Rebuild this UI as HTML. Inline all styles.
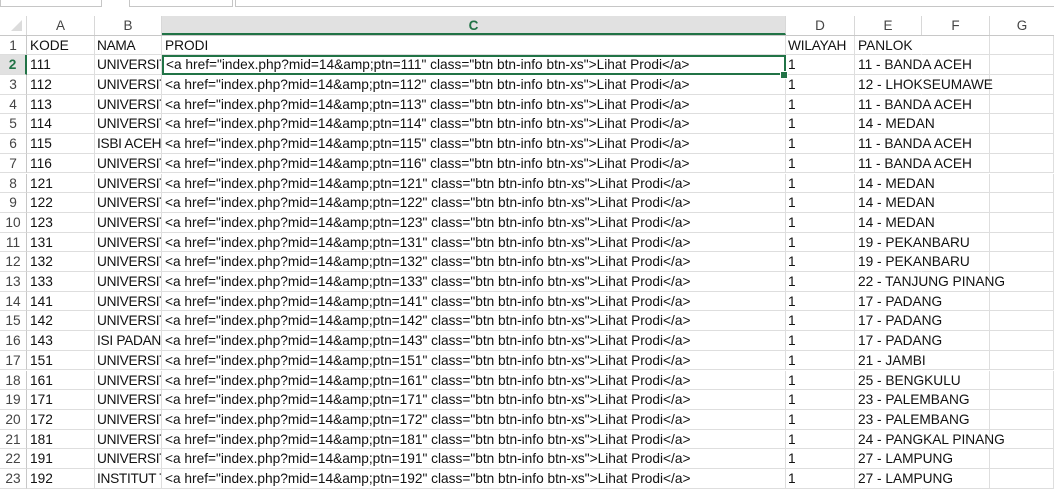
<!DOCTYPE html>
<html><head><style>
body{margin:0;width:1054px;height:486px;overflow:hidden;background:#fff;font-family:"Liberation Sans",Calibri,sans-serif;position:relative}
.tb{position:absolute;top:-2px;height:7px;border:1px solid #c6c6c6;background:#fff}
.hdr{position:absolute;top:16px;height:19px;background:#fff;border-bottom:1px solid #c8c8c8}
.hc{position:absolute;top:0;height:19px;border-right:1px solid #d8d8d8;text-align:center;font-size:13.5px;line-height:19px;color:#444}
.r{position:absolute;left:0;width:1054px;height:19.7px}
.c{position:absolute;top:0;height:100%;box-sizing:border-box;border-right:1px solid #dedede;border-bottom:1px solid #dedede;font-size:13.7px;line-height:19.7px;padding-left:3px;white-space:nowrap;overflow:hidden;color:#111}
.n{left:0;width:27px;text-align:center;padding:0;color:#444;border-right:1px solid #c8c8c8;background:#fff}
.a{left:27px;width:68px}.b{left:95px;width:67px;padding-left:2px;letter-spacing:-0.3px}.cc{left:162px;width:624px}.d{left:786px;width:69px;padding-left:2px;letter-spacing:-0.2px}.e{left:855px;width:67px;overflow:visible;z-index:2;border-right-color:transparent}.f{left:922px;width:68px}.g{left:990px;width:64px}
</style></head><body>
<div class="tb" style="left:0;width:100px"></div>
<div class="tb" style="left:129px;width:102px"></div>
<div class="tb" style="left:235px;width:830px"></div>
<div class="hdr" style="left:0;width:1054px">
<div class="hc" style="left:0;width:26px"><svg width="26" height="19"><polygon points="22,4 22,15 11,15" fill="#dcdcdc"/></svg></div>
<div class="hc" style="left:27px;width:67px">A</div>
<div class="hc" style="left:95px;width:66px">B</div>
<div class="hc" style="left:162px;width:623px;background:#e1e1e1;border-bottom:2px solid #217346;height:17px;line-height:19px;font-weight:bold;color:#217346">C</div>
<div class="hc" style="left:786px;width:68px">D</div>
<div class="hc" style="left:855px;width:66px">E</div>
<div class="hc" style="left:922px;width:67px">F</div>
<div class="hc" style="left:990px;width:64px;border-right:none">G</div>
</div>

<div class="r" style="top:35.6px"><div class="c n">1</div><div class="c a">KODE</div><div class="c b">NAMA</div><div class="c cc">PRODI</div><div class="c d">WILAYAH</div><div class="c e">PANLOK</div><div class="c f"></div><div class="c g"></div></div>
<div class="r" style="top:55.3px"><div class="c n" style="background:#e1e1e1;color:#217346;font-weight:bold;border-right:2px solid #217346">2</div><div class="c a">111</div><div class="c b">UNIVERSIT</div><div class="c cc" style="border:2px solid #217346;line-height:16px;padding-left:2px">&lt;a href="index.php?mid=14&amp;amp;ptn=111" class="btn btn-info btn-xs"&gt;Lihat Prodi&lt;/a&gt;</div><div class="c d">1</div><div class="c e">11 - BANDA ACEH</div><div class="c f"></div><div class="c g"></div></div>
<div class="r" style="top:75.0px"><div class="c n">3</div><div class="c a">112</div><div class="c b">UNIVERSIT</div><div class="c cc">&lt;a href="index.php?mid=14&amp;amp;ptn=112" class="btn btn-info btn-xs"&gt;Lihat Prodi&lt;/a&gt;</div><div class="c d">1</div><div class="c e">12 - LHOKSEUMAWE</div><div class="c f"></div><div class="c g"></div></div>
<div class="r" style="top:94.7px"><div class="c n">4</div><div class="c a">113</div><div class="c b">UNIVERSIT</div><div class="c cc">&lt;a href="index.php?mid=14&amp;amp;ptn=113" class="btn btn-info btn-xs"&gt;Lihat Prodi&lt;/a&gt;</div><div class="c d">1</div><div class="c e">11 - BANDA ACEH</div><div class="c f"></div><div class="c g"></div></div>
<div class="r" style="top:114.4px"><div class="c n">5</div><div class="c a">114</div><div class="c b">UNIVERSIT</div><div class="c cc">&lt;a href="index.php?mid=14&amp;amp;ptn=114" class="btn btn-info btn-xs"&gt;Lihat Prodi&lt;/a&gt;</div><div class="c d">1</div><div class="c e">14 - MEDAN</div><div class="c f"></div><div class="c g"></div></div>
<div class="r" style="top:134.1px"><div class="c n">6</div><div class="c a">115</div><div class="c b">ISBI ACEH(</div><div class="c cc">&lt;a href="index.php?mid=14&amp;amp;ptn=115" class="btn btn-info btn-xs"&gt;Lihat Prodi&lt;/a&gt;</div><div class="c d">1</div><div class="c e">11 - BANDA ACEH</div><div class="c f"></div><div class="c g"></div></div>
<div class="r" style="top:153.8px"><div class="c n">7</div><div class="c a">116</div><div class="c b">UNIVERSIT</div><div class="c cc">&lt;a href="index.php?mid=14&amp;amp;ptn=116" class="btn btn-info btn-xs"&gt;Lihat Prodi&lt;/a&gt;</div><div class="c d">1</div><div class="c e">11 - BANDA ACEH</div><div class="c f"></div><div class="c g"></div></div>
<div class="r" style="top:173.5px"><div class="c n">8</div><div class="c a">121</div><div class="c b">UNIVERSIT</div><div class="c cc">&lt;a href="index.php?mid=14&amp;amp;ptn=121" class="btn btn-info btn-xs"&gt;Lihat Prodi&lt;/a&gt;</div><div class="c d">1</div><div class="c e">14 - MEDAN</div><div class="c f"></div><div class="c g"></div></div>
<div class="r" style="top:193.2px"><div class="c n">9</div><div class="c a">122</div><div class="c b">UNIVERSIT</div><div class="c cc">&lt;a href="index.php?mid=14&amp;amp;ptn=122" class="btn btn-info btn-xs"&gt;Lihat Prodi&lt;/a&gt;</div><div class="c d">1</div><div class="c e">14 - MEDAN</div><div class="c f"></div><div class="c g"></div></div>
<div class="r" style="top:212.9px"><div class="c n">10</div><div class="c a">123</div><div class="c b">UNIVERSIT</div><div class="c cc">&lt;a href="index.php?mid=14&amp;amp;ptn=123" class="btn btn-info btn-xs"&gt;Lihat Prodi&lt;/a&gt;</div><div class="c d">1</div><div class="c e">14 - MEDAN</div><div class="c f"></div><div class="c g"></div></div>
<div class="r" style="top:232.6px"><div class="c n">11</div><div class="c a">131</div><div class="c b">UNIVERSIT</div><div class="c cc">&lt;a href="index.php?mid=14&amp;amp;ptn=131" class="btn btn-info btn-xs"&gt;Lihat Prodi&lt;/a&gt;</div><div class="c d">1</div><div class="c e">19 - PEKANBARU</div><div class="c f"></div><div class="c g"></div></div>
<div class="r" style="top:252.3px"><div class="c n">12</div><div class="c a">132</div><div class="c b">UNIVERSIT</div><div class="c cc">&lt;a href="index.php?mid=14&amp;amp;ptn=132" class="btn btn-info btn-xs"&gt;Lihat Prodi&lt;/a&gt;</div><div class="c d">1</div><div class="c e">19 - PEKANBARU</div><div class="c f"></div><div class="c g"></div></div>
<div class="r" style="top:272.0px"><div class="c n">13</div><div class="c a">133</div><div class="c b">UNIVERSIT</div><div class="c cc">&lt;a href="index.php?mid=14&amp;amp;ptn=133" class="btn btn-info btn-xs"&gt;Lihat Prodi&lt;/a&gt;</div><div class="c d">1</div><div class="c e">22 - TANJUNG PINANG</div><div class="c f"></div><div class="c g"></div></div>
<div class="r" style="top:291.7px"><div class="c n">14</div><div class="c a">141</div><div class="c b">UNIVERSIT</div><div class="c cc">&lt;a href="index.php?mid=14&amp;amp;ptn=141" class="btn btn-info btn-xs"&gt;Lihat Prodi&lt;/a&gt;</div><div class="c d">1</div><div class="c e">17 - PADANG</div><div class="c f"></div><div class="c g"></div></div>
<div class="r" style="top:311.4px"><div class="c n">15</div><div class="c a">142</div><div class="c b">UNIVERSIT</div><div class="c cc">&lt;a href="index.php?mid=14&amp;amp;ptn=142" class="btn btn-info btn-xs"&gt;Lihat Prodi&lt;/a&gt;</div><div class="c d">1</div><div class="c e">17 - PADANG</div><div class="c f"></div><div class="c g"></div></div>
<div class="r" style="top:331.1px"><div class="c n">16</div><div class="c a">143</div><div class="c b">ISI PADANG</div><div class="c cc">&lt;a href="index.php?mid=14&amp;amp;ptn=143" class="btn btn-info btn-xs"&gt;Lihat Prodi&lt;/a&gt;</div><div class="c d">1</div><div class="c e">17 - PADANG</div><div class="c f"></div><div class="c g"></div></div>
<div class="r" style="top:350.8px"><div class="c n">17</div><div class="c a">151</div><div class="c b">UNIVERSIT</div><div class="c cc">&lt;a href="index.php?mid=14&amp;amp;ptn=151" class="btn btn-info btn-xs"&gt;Lihat Prodi&lt;/a&gt;</div><div class="c d">1</div><div class="c e">21 - JAMBI</div><div class="c f"></div><div class="c g"></div></div>
<div class="r" style="top:370.5px"><div class="c n">18</div><div class="c a">161</div><div class="c b">UNIVERSIT</div><div class="c cc">&lt;a href="index.php?mid=14&amp;amp;ptn=161" class="btn btn-info btn-xs"&gt;Lihat Prodi&lt;/a&gt;</div><div class="c d">1</div><div class="c e">25 - BENGKULU</div><div class="c f"></div><div class="c g"></div></div>
<div class="r" style="top:390.2px"><div class="c n">19</div><div class="c a">171</div><div class="c b">UNIVERSIT</div><div class="c cc">&lt;a href="index.php?mid=14&amp;amp;ptn=171" class="btn btn-info btn-xs"&gt;Lihat Prodi&lt;/a&gt;</div><div class="c d">1</div><div class="c e">23 - PALEMBANG</div><div class="c f"></div><div class="c g"></div></div>
<div class="r" style="top:409.9px"><div class="c n">20</div><div class="c a">172</div><div class="c b">UNIVERSIT</div><div class="c cc">&lt;a href="index.php?mid=14&amp;amp;ptn=172" class="btn btn-info btn-xs"&gt;Lihat Prodi&lt;/a&gt;</div><div class="c d">1</div><div class="c e">23 - PALEMBANG</div><div class="c f"></div><div class="c g"></div></div>
<div class="r" style="top:429.6px"><div class="c n">21</div><div class="c a">181</div><div class="c b">UNIVERSIT</div><div class="c cc">&lt;a href="index.php?mid=14&amp;amp;ptn=181" class="btn btn-info btn-xs"&gt;Lihat Prodi&lt;/a&gt;</div><div class="c d">1</div><div class="c e">24 - PANGKAL PINANG</div><div class="c f"></div><div class="c g"></div></div>
<div class="r" style="top:449.3px"><div class="c n">22</div><div class="c a">191</div><div class="c b">UNIVERSIT</div><div class="c cc">&lt;a href="index.php?mid=14&amp;amp;ptn=191" class="btn btn-info btn-xs"&gt;Lihat Prodi&lt;/a&gt;</div><div class="c d">1</div><div class="c e">27 - LAMPUNG</div><div class="c f"></div><div class="c g"></div></div>
<div class="r" style="top:469.0px"><div class="c n">23</div><div class="c a">192</div><div class="c b">INSTITUT T</div><div class="c cc">&lt;a href="index.php?mid=14&amp;amp;ptn=192" class="btn btn-info btn-xs"&gt;Lihat Prodi&lt;/a&gt;</div><div class="c d">1</div><div class="c e">27 - LAMPUNG</div><div class="c f"></div><div class="c g"></div></div>
<div style="position:absolute;left:780px;top:71px;width:6px;height:6px;background:#217346;border:1px solid #fff;z-index:5"></div>
</body></html>
